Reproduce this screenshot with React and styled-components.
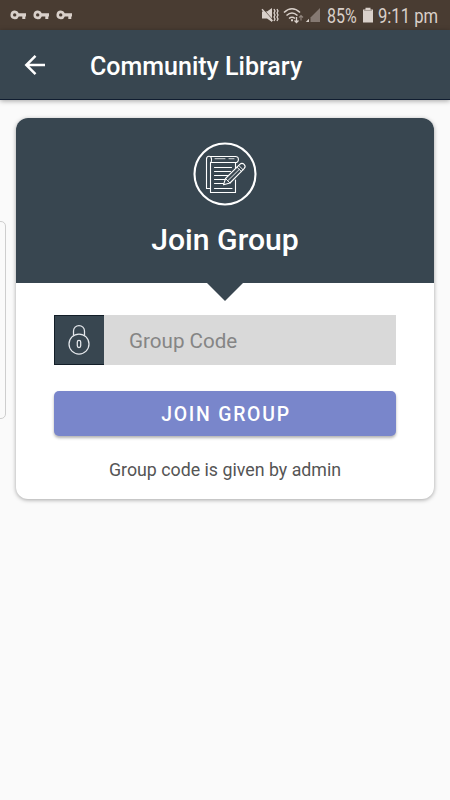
import React from "react";
import styled, { createGlobalStyle } from "styled-components";

const slate = "#384650";

const GlobalStyle = createGlobalStyle`
  * { box-sizing: border-box; }
  body { margin: 0; background: #fafafa; font-family: Roboto, "Noto Sans", sans-serif; }
`;

const Screen = styled.div`
  position: relative;
  width: 450px;
  height: 800px;
  overflow: hidden;
  background: #fafafa;
`;

const StatusBar = styled.div`
  display: flex;
  justify-content: space-between;
  height: 30px;
  padding: 0 11px 0 10px;
  background: #493c32;
  color: #d9d0ca;
`;

const KeyGroup = styled.div`
  display: flex;
  align-items: center;
  gap: 6px;
`;

const StatusGroup = styled.div`
  display: flex;
  align-items: center;
`;

const Icon = styled.svg`
  display: block;
  flex: none;
  margin-left: ${(p) => p.$left || 0}px;
`;

const StatusText = styled.span`
  width: ${(p) => p.$width}px;
  margin: 2px 0 0 ${(p) => p.$left}px;
  font-size: 20px;
  line-height: 28px;
  white-space: nowrap;
  transform: scaleX(${(p) => p.$squeeze});
  transform-origin: left center;
`;

const AppBar = styled.header`
  display: flex;
  align-items: center;
  height: 70px;
  padding: 1px 0 0 21px;
  background: ${slate};
  border-bottom: 1px solid #101d30;
  box-shadow: 0 1px 5px rgba(0, 0, 0, 0.35);
  color: #fff;
`;

const BackButton = styled.button`
  display: flex;
  width: 28px;
  height: 28px;
  padding: 0;
  border: 0;
  background: none;
  color: inherit;
`;

const Title = styled.h1`
  margin: 4px 0 0 41px;
  font-size: 25px;
  line-height: 34px;
  font-weight: 500;
`;

const Card = styled.main`
  width: 418px;
  height: 381px;
  margin: 18px 16px 0;
  border-radius: 12px;
  background: #fff;
  box-shadow: 0 1px 4px rgba(0, 0, 0, 0.35);
`;

const CardHeader = styled.div`
  position: relative;
  display: flex;
  flex-direction: column;
  align-items: center;
  height: 165px;
  padding-top: 24px;
  border-radius: 12px 12px 0 0;
  background: ${slate};
  color: #fff;
`;

const Pointer = styled.span`
  position: absolute;
  top: 100%;
  left: 191px;
  border: solid transparent;
  border-width: 18px 18px 0;
  border-top-color: ${slate};
`;

const CardTitle = styled.h2`
  margin: 14px 0 0;
  font-size: 30.2px;
  line-height: 40px;
  font-weight: 500;
`;

const Form = styled.div`
  display: flex;
  flex-direction: column;
  padding: 32px 38px 0;
`;

const Field = styled.div`
  display: flex;
  height: 50px;
  background: #d9d9d9;
`;

const LockTile = styled.div`
  display: flex;
  align-items: center;
  justify-content: center;
  width: 50px;
  padding-right: 1px;
  border: 1px solid #131e28;
  border-right: 0;
  background: ${slate};
`;

const Placeholder = styled.span`
  margin-left: 25px;
  font-size: 20.6px;
  line-height: 53px;
  color: #858585;
`;

const JoinButton = styled.button`
  height: 45px;
  margin-top: 26px;
  padding: 2px 0 0 2px;
  border: 0;
  border-radius: 5px;
  background: #7986cb;
  box-shadow: 0 2px 3px rgba(0, 0, 0, 0.3);
  color: #fff;
  font: 500 19.4px/43px Roboto, sans-serif;
  letter-spacing: 1.75px;
`;

const Hint = styled.p`
  margin: 21px 0 0;
  font-size: 17.8px;
  line-height: 26px;
  text-align: center;
  color: #555;
`;

const EdgeHandle = styled.div`
  position: absolute;
  top: 221px;
  left: -8px;
  width: 14px;
  height: 198px;
  border: 1px solid #cecece;
  border-radius: 5px;
`;

const Key = () => (
  <Icon width="17" height="10" viewBox="0 0 17 10" fill="currentColor">
    <path
      fillRule="evenodd"
      d="M4.7.6a4.3 4.3 0 1 0 4.1 5.8h3.5v2.7h3V6.4H16V3.2H8.8A4.3 4.3 0 0 0 4.7.6Zm0 2.6a1.7 1.7 0 1 1 0 3.4 1.7 1.7 0 0 1 0-3.4Z"
    />
  </Icon>
);

const MutedSpeaker = () => (
  <Icon width="18" height="16" viewBox="0 0 18 16">
    <path d="M1 4.5h5l5-3.5v14l-5-3.5H1Z" fill="currentColor" />
    <path d="M2 2 12 13" stroke="#493c32" strokeWidth="1" />
    <path d="M1 2.2 11.5 14" stroke="currentColor" strokeWidth="1.4" />
    <path d="m13 2 1 2-1 2 1 2-1 2 1 2-1 2M16 2l1 2-1 2 1 2-1 2 1 2-1 2" fill="none" stroke="currentColor" strokeWidth="1.3" />
  </Icon>
);

const Wifi = () => (
  <Icon $left={4} width="22" height="17" viewBox="0 0 22 17" fill="none" stroke="currentColor" strokeWidth="1.6">
    <path d="M1 5.5q8-7.5 16 0M3.5 8.5q5.5-5 11 0M6 11.5q3-2.5 6 0" />
    <path d="M8 12.3h2v2H8Z" fill="currentColor" stroke="none" />
    <path d="M13.5 10v5.5m-2-2 2 2 2-2" strokeWidth="1.3" />
    <path d="M18 13.5V8.5m-2 2 2-2 2 2" strokeWidth="1.2" opacity=".5" />
  </Icon>
);

const Signal = () => (
  <Icon width="16" height="16" viewBox="0 0 16 16" fill="currentColor">
    <path d="M15 1v14H5.5v-4.5Z" opacity=".42" />
    <path d="M4 11.8V15H.8Z" />
  </Icon>
);

const Battery = () => (
  <Icon $left={6} width="10" height="16" viewBox="0 0 10 16" fill="currentColor">
    <path d="M0 2.5h10v13H0ZM2.5.7h5v2h-5Z" />
    <path d="M1 3.5h8" stroke="#a99f98" />
  </Icon>
);

const BackArrow = () => (
  <Icon width="28" height="28" viewBox="0 0 28 28" fill="none" stroke="currentColor" strokeWidth="2.5">
    <path d="M24 14H6M14.5 4.8 5.3 14l9.2 9.2" />
  </Icon>
);

const NotebookBadge = () => (
  <Icon width="64" height="64" viewBox="0 0 64 64" fill="none" stroke="#fff">
    <circle cx="32" cy="32" r="30.5" strokeWidth="2.1" />
    <g strokeWidth="1.1" strokeLinejoin="round" strokeLinecap="round">
      <path d="M17.5 20.5v30H42.5V38M42.5 31V20.5" />
      <path d="M17.5 46.5h-4V17.2c0-4 5-4 5 0v1c0 1.5-.7 2.3-1 2.3M42 20.5q3.4 0 3.4-3.1T42 14.5H16.5M18.5 20.5H42" />
      <path d="M22 16.7h10M36 16.7h5" strokeWidth=".8" />
      <path d="M21.5 25.5h17M21.5 29.5h16M21.5 33.5h13M21.5 37.5h11M21.5 41.5h9M21.5 46.5h17.5" />
      <path d="m30.5 42.8 2-6.3L46.8 22.4q2.2-2 4.3 0t0 4.3L37 41Z" fill={slate} />
      <path d="m32.5 36.5 4.5 4.5M44 25.2l4.5 4.4M45.8 23.5l4.4 4.4M35 38.5 46.3 27.4" strokeWidth=".9" />
    </g>
  </Icon>
);

const Lock = () => (
  <Icon width="24" height="34" viewBox="0 0 24 34" fill="none" stroke="#e5e8ec" strokeWidth="1.25">
    <circle cx="12" cy="21" r="10" />
    <path d="M6.5 12.5V8a5.5 5.5 0 0 1 11 0v4.5" />
    <rect x="10.3" y="17.3" width="3.4" height="7.2" rx="1.7" />
  </Icon>
);

export default function App() {
  return (
    <>
      <GlobalStyle />
      <Screen>
        <StatusBar>
          <KeyGroup>
            <Key />
            <Key />
            <Key />
          </KeyGroup>
          <StatusGroup>
            <MutedSpeaker />
            <Wifi />
            <Signal />
            <StatusText $width={30} $left={6} $squeeze={0.8}>85%</StatusText>
            <Battery />
            <StatusText $width={61} $left={5} $squeeze={0.83}>9:11 pm</StatusText>
          </StatusGroup>
        </StatusBar>
        <AppBar>
          <BackButton aria-label="Back">
            <BackArrow />
          </BackButton>
          <Title>Community Library</Title>
        </AppBar>
        <Card>
          <CardHeader>
            <NotebookBadge />
            <CardTitle>Join Group</CardTitle>
            <Pointer />
          </CardHeader>
          <Form>
            <Field>
              <LockTile>
                <Lock />
              </LockTile>
              <Placeholder>Group Code</Placeholder>
            </Field>
            <JoinButton>JOIN GROUP</JoinButton>
            <Hint>Group code is given by admin</Hint>
          </Form>
        </Card>
        <EdgeHandle />
      </Screen>
    </>
  );
}
